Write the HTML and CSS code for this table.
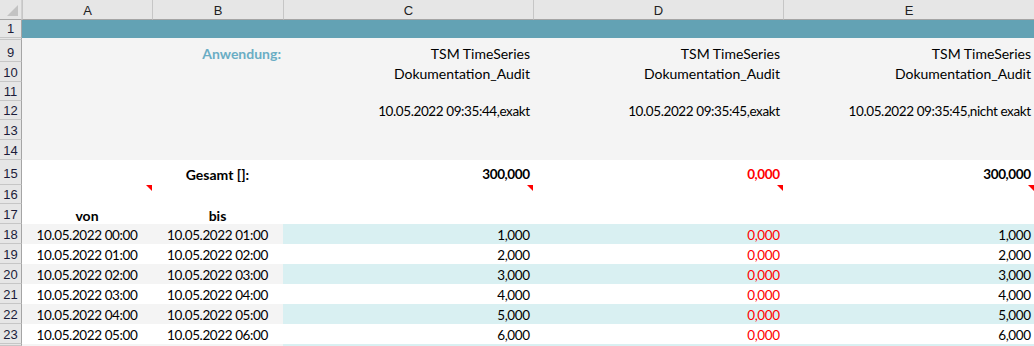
FILE: index.html
```html
<!DOCTYPE html>
<html lang="de">
<head>
<meta charset="utf-8">
<title>Dokumentation_Audit</title>
<link rel="stylesheet" href="styles.css">
</head>
<body>
<div class="sheet">
  <div class="row colhead">
    <div class="corner"><span class="corner-tri"></span></div>
    <div class="ch">A</div>
    <div class="ch">B</div>
    <div class="ch">C</div>
    <div class="ch">D</div>
    <div class="ch last">E</div>
  </div>

  <div class="row r-band">
    <div class="rh">1</div>
    <div class="c band"></div><div class="c band"></div><div class="c band"></div><div class="c band"></div><div class="c band"></div>
  </div>
  <div class="row r-gap">
    <div class="rh"></div>
    <div class="c grey"></div><div class="c grey"></div><div class="c grey"></div><div class="c grey"></div><div class="c grey"></div>
  </div>

  <div class="row r22">
    <div class="rh">9</div>
    <div class="c grey"></div>
    <div class="c grey right label">Anwendung:</div>
    <div class="c grey right">TSM TimeSeries</div>
    <div class="c grey right">TSM TimeSeries</div>
    <div class="c grey right">TSM TimeSeries</div>
  </div>
  <div class="row r20">
    <div class="rh">10</div>
    <div class="c grey"></div><div class="c grey"></div>
    <div class="c grey right">Dokumentation_Audit</div>
    <div class="c grey right">Dokumentation_Audit</div>
    <div class="c grey right">Dokumentation_Audit</div>
  </div>
  <div class="row r19">
    <div class="rh">11</div>
    <div class="c grey"></div><div class="c grey"></div><div class="c grey"></div><div class="c grey"></div><div class="c grey"></div>
  </div>
  <div class="row r19">
    <div class="rh">12</div>
    <div class="c grey"></div><div class="c grey"></div>
    <div class="c grey right num">10.05.2022 09:35:44,exakt</div>
    <div class="c grey right num">10.05.2022 09:35:45,exakt</div>
    <div class="c grey right num">10.05.2022 09:35:45,nicht exakt</div>
  </div>
  <div class="row r20">
    <div class="rh">13</div>
    <div class="c grey"></div><div class="c grey"></div><div class="c grey"></div><div class="c grey"></div><div class="c grey"></div>
  </div>
  <div class="row r20">
    <div class="rh">14</div>
    <div class="c grey"></div><div class="c grey"></div><div class="c grey"></div><div class="c grey"></div><div class="c grey"></div>
  </div>

  <div class="row r25">
    <div class="rh">15</div>
    <div class="c"></div>
    <div class="c center bold">Gesamt []:</div>
    <div class="c right bold num">300,000</div>
    <div class="c right bold num red">0,000</div>
    <div class="c right bold num">300,000</div>
  </div>
  <div class="row r19">
    <div class="rh">16</div>
    <div class="c"><span class="note"></span></div>
    <div class="c"></div>
    <div class="c"><span class="note"></span></div>
    <div class="c"><span class="note"></span></div>
    <div class="c"><span class="note"></span></div>
  </div>
  <div class="row r20">
    <div class="rh">17</div>
    <div class="c center bold">von</div>
    <div class="c center bold">bis</div>
    <div class="c"></div><div class="c"></div><div class="c"></div>
  </div>

  <div class="row r20 alt">
    <div class="rh">18</div>
    <div class="c center num">10.05.2022 00:00</div>
    <div class="c center num">10.05.2022 01:00</div>
    <div class="c right num val">1,000</div>
    <div class="c right num val red">0,000</div>
    <div class="c right num val">1,000</div>
  </div>
  <div class="row r20">
    <div class="rh">19</div>
    <div class="c center num">10.05.2022 01:00</div>
    <div class="c center num">10.05.2022 02:00</div>
    <div class="c right num val">2,000</div>
    <div class="c right num val red">0,000</div>
    <div class="c right num val">2,000</div>
  </div>
  <div class="row r20 alt">
    <div class="rh">20</div>
    <div class="c center num">10.05.2022 02:00</div>
    <div class="c center num">10.05.2022 03:00</div>
    <div class="c right num val">3,000</div>
    <div class="c right num val red">0,000</div>
    <div class="c right num val">3,000</div>
  </div>
  <div class="row r20">
    <div class="rh">21</div>
    <div class="c center num">10.05.2022 03:00</div>
    <div class="c center num">10.05.2022 04:00</div>
    <div class="c right num val">4,000</div>
    <div class="c right num val red">0,000</div>
    <div class="c right num val">4,000</div>
  </div>
  <div class="row r20 alt">
    <div class="rh">22</div>
    <div class="c center num">10.05.2022 04:00</div>
    <div class="c center num">10.05.2022 05:00</div>
    <div class="c right num val">5,000</div>
    <div class="c right num val red">0,000</div>
    <div class="c right num val">5,000</div>
  </div>
  <div class="row r20">
    <div class="rh">23</div>
    <div class="c center num">10.05.2022 05:00</div>
    <div class="c center num">10.05.2022 06:00</div>
    <div class="c right num val">6,000</div>
    <div class="c right num val red">0,000</div>
    <div class="c right num val">6,000</div>
  </div>
  <div class="row r-edge alt">
    <div class="rh"></div>
    <div class="c"></div>
    <div class="c"></div>
    <div class="c val"></div>
    <div class="c val"></div>
    <div class="c val"></div>
  </div>
</div>
</body>
</html>
```

FILE: styles.css
```css
* { box-sizing: border-box; }
html, body {
  margin: 0;
  padding: 0;
  width: 1034px;
  height: 346px;
  overflow: hidden;
  background: #ffffff;
}
.sheet {
  display: flex;
  flex-direction: column;
  font-family: Lato, "Open Sans", sans-serif;
  font-size: 14px;
  color: #000;
}
.row {
  display: grid;
  grid-template-columns: 22px 130px 131px 250px 250px 251px;
}
.colhead { height: 20px; }
.r-band { height: 18px; }
.r-gap { height: 2px; }
.r19 { height: 19px; }
.r20 { height: 20px; }
.r22 { height: 22px; }
.r25 { height: 25px; }
.r-edge { height: 2px; }

.corner {
  position: relative;
  background: #e6e6e6;
  border-right: 1px solid #d0d0d0;
  border-bottom: 1px solid #a5a5a5;
}
.corner-tri {
  position: absolute;
  right: 3px;
  bottom: 3px;
  width: 0;
  height: 0;
  border-left: 11px solid transparent;
  border-bottom: 11px solid #c3c3c3;
}
.ch {
  background: #e6e6e6;
  border-bottom: 1px solid #a5a5a5;
  border-left: 1px solid #c6c6c6;
  font-family: "Liberation Sans", Arial, sans-serif;
  font-size: 13px;
  color: #222;
  display: flex;
  align-items: center;
  justify-content: center;
  padding-top: 1px;
}
.rh {
  background: #e6e6e6;
  border-right: 1px solid #a5a5a5;
  border-bottom: 1px solid #c6c6c6;
  font-family: "Liberation Sans", Arial, sans-serif;
  font-size: 13px;
  color: #1c1c3a;
  display: flex;
  align-items: flex-end;
  justify-content: center;
  padding-bottom: 0;
  line-height: 16px;
}
.r25 .rh { padding-bottom: 2px; }
.c {
  position: relative;
  display: flex;
  align-items: flex-end;
  padding: 0 3px 0 3px;
  line-height: 17px;
  white-space: nowrap;
  overflow: visible;
}
.r25 .c { padding-bottom: 2px; }
.num {
  font-size: 13.5px;
  letter-spacing: -0.4px;
}
.right { justify-content: flex-end; }
.right.num { padding-right: 3.4px; }
.center { justify-content: center; }
.bold { font-weight: 700; }
.red { color: #ff0000; }
.band { background: #63a2b4; }
.grey { background: #f4f4f4; }
.label { color: #6aadc4; font-weight: 700; padding-right: 2px; }
.alt .c { background: #f4f4f4; }
.alt .val { background: #d9f0f2; }
.note {
  position: absolute;
  top: 0;
  right: 0;
  width: 0;
  height: 0;
  border-top: 6px solid #ff0000;
  border-left: 6px solid transparent;
}
```
